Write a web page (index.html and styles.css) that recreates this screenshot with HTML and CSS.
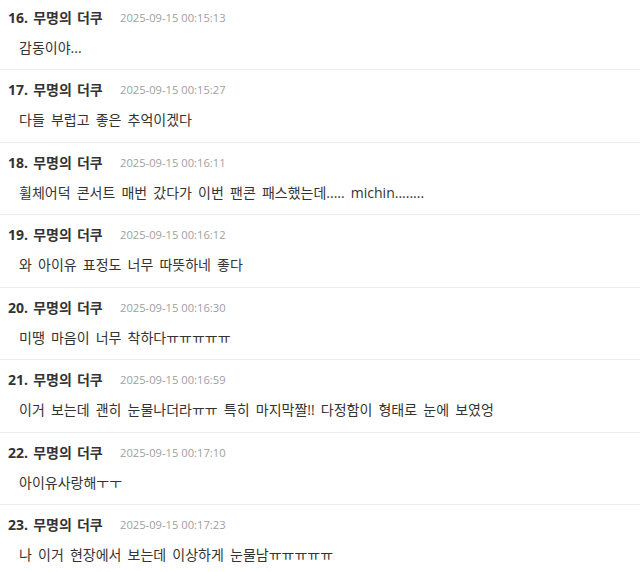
FILE: index.html
```html
<!DOCTYPE html>
<html lang="ko">
<head>
<meta charset="utf-8">
<link rel="stylesheet" href="styles.css">
</head>
<body>
<ul class="comments">
  <li class="comment"><div class="head"><span class="name">16. 무명의 더쿠</span><span class="date">2025-09-15 00:15:13</span></div><div class="text">감동이야...</div></li>
  <li class="comment"><div class="head"><span class="name">17. 무명의 더쿠</span><span class="date">2025-09-15 00:15:27</span></div><div class="text">다들 부럽고 좋은 추억이겠다</div></li>
  <li class="comment"><div class="head"><span class="name">18. 무명의 더쿠</span><span class="date">2025-09-15 00:16:11</span></div><div class="text">휠체어덕 콘서트 매번 갔다가 이번 팬콘 패스했는데..... michin........</div></li>
  <li class="comment"><div class="head"><span class="name">19. 무명의 더쿠</span><span class="date">2025-09-15 00:16:12</span></div><div class="text">와 아이유 표정도 너무 따뜻하네 좋다</div></li>
  <li class="comment"><div class="head"><span class="name">20. 무명의 더쿠</span><span class="date">2025-09-15 00:16:30</span></div><div class="text">미땡 마음이 너무 착하다ㅠㅠㅠㅠㅠ</div></li>
  <li class="comment"><div class="head"><span class="name">21. 무명의 더쿠</span><span class="date">2025-09-15 00:16:59</span></div><div class="text">이거 보는데 괜히 눈물나더라ㅠㅠ 특히 마지막짤!! 다정함이 형태로 눈에 보였엉</div></li>
  <li class="comment"><div class="head"><span class="name">22. 무명의 더쿠</span><span class="date">2025-09-15 00:17:10</span></div><div class="text">아이유사랑해ㅜㅜ</div></li>
  <li class="comment"><div class="head"><span class="name">23. 무명의 더쿠</span><span class="date">2025-09-15 00:17:23</span></div><div class="text">나 이거 현장에서 보는데 이상하게 눈물남ㅠㅠㅠㅠㅠ</div></li>
</ul>
</body>
</html>
```
FILE: styles.css
```css
html, body {
  margin: 0;
  padding: 0;
  background: #ffffff;
  overflow: hidden;
}
body {
  font-family: "Open Sans", "Noto Sans CJK KR", sans-serif;
  color: #333333;
}
.comments {
  list-style: none;
  margin: -2.5px 0 0 0;
  padding: 0;
}
.comment {
  padding: 10px 8px 11.5px 8px;
  border-bottom: 1px solid #ececec;
}
.head {
  display: flex;
  align-items: center;
  height: 20px;
  line-height: 20px;
}
.name {
  font-size: 14px;
  font-weight: 700;
  word-spacing: 1.5px;
  color: #333333;
  width: 112px;
}
.date {
  font-size: 11.2px;
  color: #a0a0a0;
}
.text {
  margin-top: 10px;
  padding-left: 11px;
  font-size: 14px;
  line-height: 20px;
  word-spacing: 2.5px;
  color: #333333;
}
```
